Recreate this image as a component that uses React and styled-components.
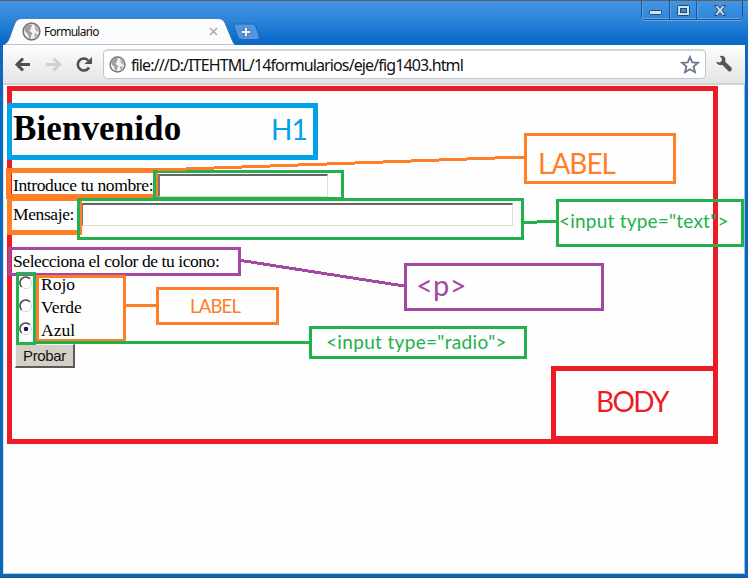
import React from "react";
import styled, { createGlobalStyle } from "styled-components";

const RED = "#ed1c24";
const CYAN = "#00a2e8";
const ORANGE = "#ff7f27";
const GREEN = "#22b14c";
const PURPLE = "#a349a4";

const GlobalStyle = createGlobalStyle`
  *, *::before, *::after { box-sizing: border-box; }
  body { margin: 0; background: #fff; overflow: hidden; }
`;

/* ---------- window frame ---------- */

const Window = styled.div`
  position: relative;
  width: 748px;
  height: 578px;
  display: flex;
  flex-direction: column;
  border-top: 1px solid #5b5f66;
  border-bottom: 1px solid #15558f;
  background: #0a6cc4;
`;

const TitleBar = styled.header`
  height: 44px;
  flex: none;
  display: flex;
  align-items: flex-end;
  justify-content: space-between;
  background: linear-gradient(#4396e4 0%, #2b83d8 45%, #0d6dcb 85%, #0b68c4 100%);
`;

const TabStrip = styled.div`
  display: flex;
  align-items: flex-end;
  height: 100%;
`;

const Tab = styled.div`
  position: relative;
  width: 233px;
  height: 27px;
  display: flex;
  align-items: center;
  padding: 0 0 1px 22px;
`;

const TabShape = styled.svg`
  position: absolute;
  left: 0;
  bottom: 0;
`;

const TabTitle = styled.span`
  position: relative;
  top: 1px;
  width: 165px;
  margin-left: 3px;
  font: 12px/16px "Noto Sans", "Open Sans", sans-serif;
  letter-spacing: -0.75px;
  color: #111;
`;

const TabIcon = styled.svg`
  position: relative;
  flex: none;
`;

const NewTab = styled.svg`
  margin-bottom: 4px;
`;

const Controls = styled.div`
  align-self: flex-start;
  display: flex;
  height: 19px;
  margin-right: 5px;
  border: 1px solid #1b5596;
  border-top: 0;
  border-radius: 0 0 4px 4px;
  box-shadow: 0 1px 0 #67a9e8, inset 0 -1px 0 #67a9e8;
`;

const Control = styled.div`
  width: ${(p) => p.$w}px;
  display: flex;
  align-items: center;
  justify-content: center;
  border-left: ${(p) => (p.$first ? "0" : "1px solid #1b5596")};
  box-shadow: inset 1px 0 0 #5aa0e4;
`;

const Frame = styled.div`
  flex: 1;
  min-height: 0;
  display: flex;
  flex-direction: column;
  border: solid #0b68ba;
  border-width: 0 3px 3px 3px;
  box-shadow: inset 1px 0 0 #5795cb;
`;

const Toolbar = styled.div`
  height: 40px;
  flex: none;
  display: flex;
  align-items: center;
  padding: 0 12px 1px 11px;
  background: linear-gradient(#fdfdfd, #e4e4e4);
  border-bottom: 2px solid #cfd3d8;
`;

const NavIcons = styled.svg`
  flex: none;
`;

const AddressBar = styled.div`
  flex: none;
  width: 603px;
  height: 30px;
  margin: 1px 9px 0 7px;
  padding: 0 5px 0 5px;
  display: flex;
  align-items: center;
  background: #fff;
  border: 1px solid #c2c4c7;
  border-top: 2px solid #d3d5d8;
  border-radius: 5px;
`;

const Url = styled.span`
  flex: 1;
  margin-left: 5px;
  white-space: nowrap;
  font: 16px/24px "Noto Sans", "Open Sans", sans-serif;
  letter-spacing: -0.88px;
  color: #111;
`;

/* ---------- page ---------- */

const Page = styled.main`
  flex: 1;
  min-height: 0;
  padding: 22px 0 0 9px;
  background: #fefefe;
  border-left: 1px solid #d9e3ec;
  border-right: 1px solid #9fc0dc;
  border-bottom: 1px solid #b5cbdc;
  font-family: "Liberation Serif", "Times New Roman", serif;
  font-size: 17.5px;
  color: #000;
`;

const Title = styled.h1`
  height: 66px;
  margin: 0;
  font-size: 35px;
  line-height: 44px;
  letter-spacing: 0.1px;
`;

const Row = styled.div`
  display: flex;
  align-items: ${(p) => p.$align || "center"};
  height: ${(p) => p.$h}px;
  line-height: ${(p) => p.$h}px;
  gap: ${(p) => p.$gap || 0}px;
  white-space: nowrap;
`;

const FieldLabel = styled.label`
  width: ${(p) => p.$w}px;
  flex: none;
  letter-spacing: -0.38px;
`;

const Field = styled.input`
  width: ${(p) => p.$w}px;
  height: 23px;
  padding: 0 3px;
  border: 1px solid #dedbd7;
  border-top: 2px solid #666;
  border-left: 2px solid #777;
  border-radius: 0;
  outline: 0;
  background: #fff;
`;

const Prompt = styled.p`
  height: 23px;
  margin: 20px 0 0;
  line-height: 23px;
  letter-spacing: -0.43px;
`;

const RadioMark = styled.svg`
  flex: none;
  margin: 0 0 4px 6px;
`;

const Submit = styled.button`
  display: block;
  width: 60px;
  height: 24px;
  margin: 2px 0 0 2px;
  padding: 0;
  background: #d4d0c8;
  border: 1px solid #f4f2ee;
  border-right: 2px solid #5c5a56;
  border-bottom: 2px solid #5c5a56;
  border-radius: 0;
  font: 15px/20px "Liberation Sans", Arial, sans-serif;
  letter-spacing: -0.35px;
  color: #111;
`;

/* ---------- annotations drawn over the window ---------- */

const Layer = styled.div`
  position: absolute;
  inset: -1px 0 0 0;
  pointer-events: none;
`;

const Outline = styled.div`
  position: absolute;
  left: ${(p) => p.$x}px;
  top: ${(p) => p.$y}px;
  width: ${(p) => p.$w}px;
  height: ${(p) => p.$h}px;
  border: ${(p) => p.$b || 3}px solid ${(p) => p.$c};
`;

const Note = styled.span`
  position: absolute;
  left: ${(p) => p.$x}px;
  top: ${(p) => p.$y}px;
  white-space: nowrap;
  font: ${(p) => p.$size}px/${(p) => p.$lh || 36}px Lato, Carlito, sans-serif;
  letter-spacing: ${(p) => p.$ls || 0}px;
  color: ${(p) => p.$c};
`;

const Connectors = styled.svg`
  position: absolute;
  left: 0;
  top: 0;
`;

function Globe({ size, as: As = "svg" }) {
  return (
    <As width={size} height={size} viewBox="0 0 18 18">
      <circle cx="9" cy="9" r="7.9" fill="#f3f3f3" stroke="#777" strokeWidth="1.5" />
      <path d="M3 4.5 6 2.2 9 2.5 9.5 4 8 5.5 8.5 7 6.5 8 8.5 9.5 10 11 8.5 13 8.3 16 6.5 15 5.5 11.5 3 9 2 6.5Z" fill="#a0a0a0" />
      <path d="M11 2.5 14 4 16 7 15.5 9.5 13.5 8.5 12 6.5 12.5 5ZM12 10.5 15 11.5 13 14.5 11.5 14Z" fill="#b0b0b0" />
    </As>
  );
}

function Radio({ checked }) {
  return (
    <RadioMark width="14" height="14" viewBox="0 0 14 14">
      <circle cx="7" cy="7" r="5.6" fill="#fff" stroke="#dcd9d4" />
      <path d="M2.6 11A5.8 5.8 0 0 1 11 2.7" fill="none" stroke="#484848" strokeWidth="1.5" />
      {checked && <circle cx="7" cy="7" r="2.3" fill="#12127c" />}
    </RadioMark>
  );
}

const OUTLINES = [
  [7, 86, 711, 358, RED, 5],
  [551, 366, 167, 75, RED, 5],
  [7, 103, 311, 57, CYAN, 5],
  [7, 196, 75, 39, ORANGE, 5],
  [6, 168, 152, 31, ORANGE, 5],
  [153, 170, 191, 30, GREEN],
  [77, 198, 447, 42, GREEN],
  [524, 133, 152, 51, ORANGE],
  [556, 199, 188, 48, GREEN],
  [8, 247, 233, 29, PURPLE],
  [404, 263, 200, 48, PURPLE],
  [16, 272, 20, 73, GREEN],
  [36, 275, 90, 67, ORANGE],
  [156, 287, 123, 38, ORANGE],
  [309, 326, 218, 33, GREEN],
];

export default function App() {
  return (
    <>
      <GlobalStyle />
      <Window>
        <TitleBar>
          <TabStrip>
            <Tab>
              <TabShape width="236" height="27" viewBox="0 0 236 27">
                <path d="M3 27C8 25 9 22 12 13L15 5Q17 .5 21 .5H219Q223 .5 225 5L232 22Q234 27 236 27Z" fill="#fcfcfc" stroke="#2464ab" strokeWidth=".7" />
              </TabShape>
              <Globe size={19} as={TabIcon} />
              <TabTitle>Formulario</TabTitle>
              <TabIcon width="9" height="9" viewBox="0 0 9 9">
                <path d="M1 1 8 8M8 1 1 8" stroke="#aaa" strokeWidth="1.6" />
              </TabIcon>
            </Tab>
            <NewTab width="28" height="18" viewBox="0 0 28 18">
              <path d="M2 1H20Q22 1 23 4L26 13Q27 16.5 24 16.5H9Q6 16.5 5 14L1 3Q.4 1 2 1Z" fill="#5395de" stroke="#2467b1" />
              <path d="M13 5V13M9 9H17" stroke="#36699f" strokeWidth="3.6" />
              <path d="M13 5V13M9 9H17" stroke="#f4f6f2" strokeWidth="2.2" />
            </NewTab>
          </TabStrip>
          <Controls>
            <Control $w={27} $first>
              <svg width="15" height="17" viewBox="0 0 15 17">
                <rect x="1.5" y="8.5" width="12" height="4" rx="1" fill="#cfe1f6" stroke="#23496f" />
              </svg>
            </Control>
            <Control $w={27}>
              <svg width="15" height="15" viewBox="0 0 15 15">
                <rect x="1.5" y="2.5" width="12" height="10" rx="1" fill="#cfe1f6" stroke="#23496f" />
                <rect x="4.5" y="5.5" width="6" height="4" fill="#3b88d5" stroke="#23496f" />
              </svg>
            </Control>
            <Control $w={46}>
              <svg width="14" height="15" viewBox="0 0 14 15">
                <path d="M1.5 2.5H4.5L7 5.3 9.5 2.5H12.5L9 7.3 12.5 12.5H9.5L7 9.5 4.5 12.5H1.5L5 7.3Z" fill="#cfe1f6" stroke="#23496f" />
              </svg>
            </Control>
          </Controls>
        </TitleBar>

        <Frame>
          <Toolbar>
            <NavIcons width="82" height="24" viewBox="0 0 82 24">
              <path d="M16 12.5H3M9 6.5 3 12.5 9 18.5" fill="none" stroke="#505050" strokeWidth="3" />
              <path d="M32 12.5H45M39.5 6.5 45.5 12.5 39.5 18.5" fill="none" stroke="#d0d0d0" strokeWidth="3" />
              <path d="M75 15.5A6 6 0 1 1 74 8.2" fill="none" stroke="#505050" strokeWidth="2.6" />
              <path d="M78 5V12H70.5Z" fill="#505050" />
            </NavIcons>
            <AddressBar>
              <Globe size={17} />
              <Url>file:///D:/ITEHTML/14formularios/eje/fig1403.html</Url>
              <svg width="20" height="20" viewBox="0 0 20 20">
                <path d="M10 2 12.2 7.3 18 7.8 13.6 11.5 15 17.2 10 14.2 5 17.2 6.4 11.5 2 7.8 7.8 7.3Z" fill="#fff" stroke="#69788f" strokeWidth="1.8" />
              </svg>
            </AddressBar>
            <svg width="20" height="20" viewBox="0 0 19 19">
              <path d="M5 1Q10 0 11 4L10.8 7 17.5 13.5Q18.5 16 16 17.5 15 17.7 14 17L7.8 10.5Q3 11.5 1 7L5 8 7.2 6V4Z" fill="#555" />
            </svg>
          </Toolbar>

          <Page>
            <Title>Bienvenido</Title>
            <Row $h={25}>
              <FieldLabel $w={145}>Introduce tu nombre:</FieldLabel>
              <Field $w={170} aria-label="nombre" />
            </Row>
            <Row $h={32}>
              <FieldLabel $w={68}>Mensaje:</FieldLabel>
              <Field $w={432} aria-label="mensaje" />
            </Row>
            <Prompt>Selecciona el color de tu icono:</Prompt>
            {["Rojo", "Verde", "Azul"].map((name) => (
              <Row key={name} $h={23} $gap={8}>
                <Radio checked={name === "Azul"} />
                <span>{name}</span>
              </Row>
            ))}
            <Submit>Probar</Submit>
          </Page>
        </Frame>

        <Layer>
          {OUTLINES.map(([x, y, w, h, c, b]) => (
            <Outline key={`${x}-${y}`} $x={x} $y={y} $w={w} $h={h} $c={c} $b={b} />
          ))}
          <Connectors width="748" height="578" fill="none" strokeWidth="3" shapeRendering="crispEdges">
            <path d="M158 170 524 157M126 305.5H156" stroke={ORANGE} />
            <path d="M524 222.7 556 221M36 342.5H309" stroke={GREEN} />
            <path d="M241 260.5 404 286" stroke={PURPLE} />
          </Connectors>
          <Note $x={271} $y={111} $size={28} $ls={-1} $c={CYAN}>H1</Note>
          <Note $x={538} $y={145} $size={28} $ls={-1} $c={ORANGE}>LABEL</Note>
          <Note $x={559} $y={203} $size={19} $ls={0.22} $c={GREEN}>{'<input type="text">'}</Note>
          <Note $x={416} $y={267} $size={29} $ls={0.3} $c={PURPLE}>{"<p>"}</Note>
          <Note $x={190} $y={288} $size={18.5} $ls={-0.8} $c={ORANGE}>LABEL</Note>
          <Note $x={326} $y={324} $size={19} $ls={0.33} $c={GREEN}>{'<input type="radio">'}</Note>
          <Note $x={596} $y={383} $size={28} $ls={-1.6} $c={RED}>BODY</Note>
        </Layer>
      </Window>
    </>
  );
}
